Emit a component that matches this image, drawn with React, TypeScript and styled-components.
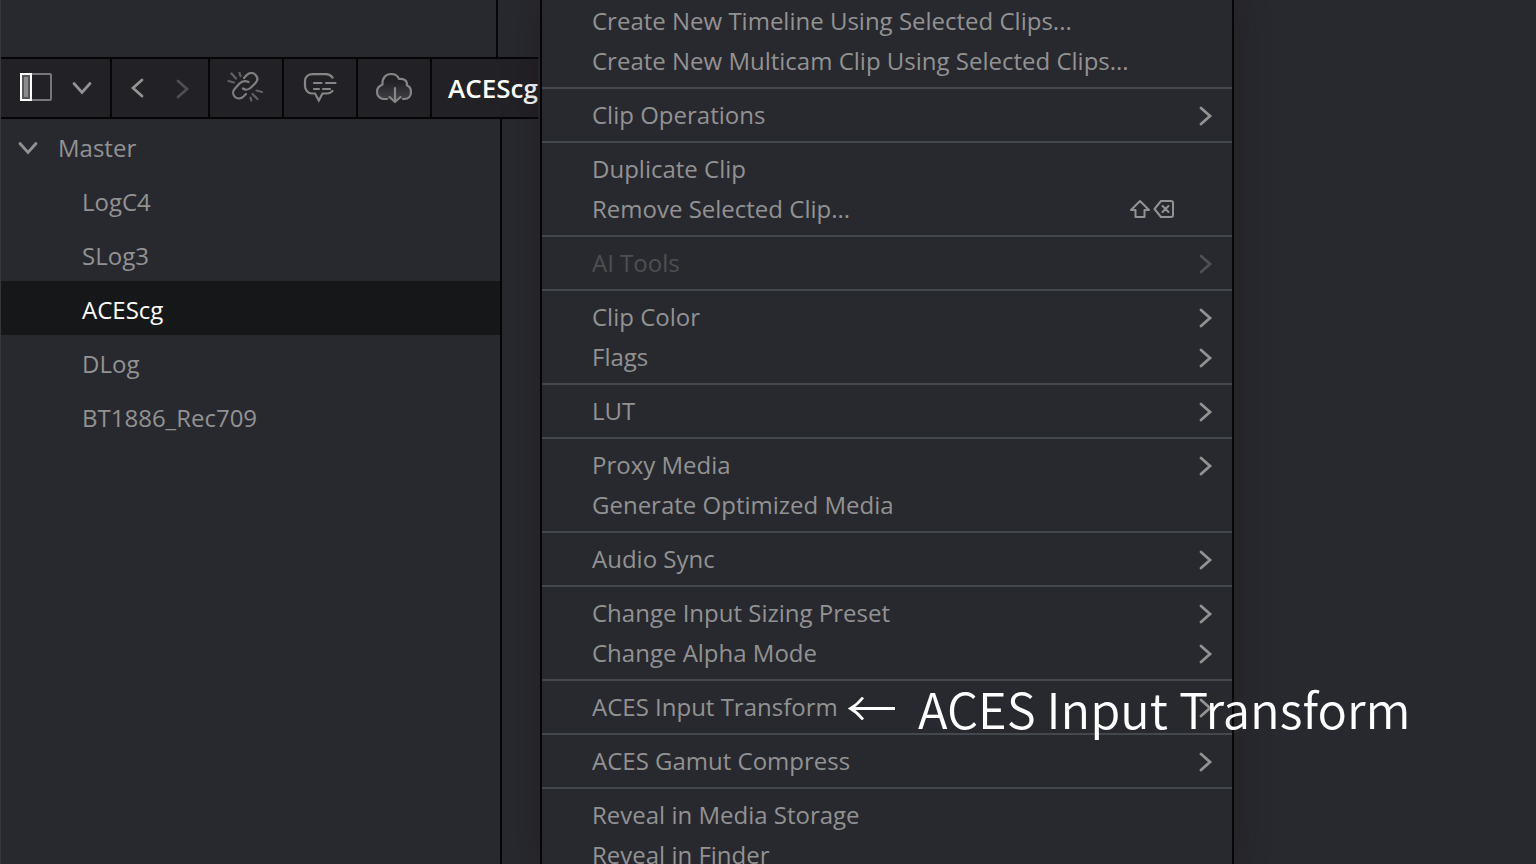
import React from "react";
import styled, { createGlobalStyle } from "styled-components";

const GlobalStyle = createGlobalStyle`
  *, *::before, *::after { box-sizing: border-box; }
  body {
    margin: 0;
    background: #28292e;
    color: #929292;
    font-family: "Open Sans", "Noto Sans", sans-serif;
    font-size: 24px;
    line-height: 32px;
  }
  button { font: inherit; color: inherit; background: none; border: 0; padding: 0; margin: 0; }
  ul { list-style: none; margin: 0; padding: 0; }
  svg { display: block; flex: none; }
`;

const Page = styled.div`
  position: relative;
  height: 100vh;
  overflow: hidden;
`;

const Browser = styled.section`
  width: 538px;
  height: 100%;
  display: flex;
  flex-direction: column;
  border-left: 1px solid #36373c;
`;

const Preview = styled.div`
  width: 497px;
  height: 57px;
  flex: none;
  border-right: 2px solid #060607;
`;

const Toolbar = styled.div`
  display: flex;
  flex: none;
  height: 62px;
  background: #222126;
  border-top: 2px solid #060607;
  border-bottom: 2px solid #060607;
`;

const Group = styled.div<{ $width: number; $between?: boolean }>`
  display: flex;
  justify-content: ${(p) => (p.$between ? "space-between" : "center")};
  width: ${(p) => p.$width}px;
  padding: 0 ${(p) => (p.$between ? 18 : 0)}px;
  flex: none;
  border-right: 2px solid #060607;
`;

const ToolButton = styled.button<{ $dim?: boolean }>`
  display: flex;
  align-items: center;
  justify-content: center;
  color: ${(p) => (p.$dim ? "#4e4e51" : "#929292")};
`;

const BinTitle = styled.h1`
  margin: 0;
  padding-left: 16px;
  font-size: 26px;
  line-height: 58px;
  font-weight: 600;
  color: #ffffff;
`;

const Tree = styled.ul`
  flex: 1;
  width: 501px;
  border-right: 2px solid #060607;
`;

const TreeButton = styled.button<{ $level: number; $selected?: boolean }>`
  display: flex;
  align-items: center;
  gap: 20px;
  width: 100%;
  height: 54px;
  padding: 4px 16px 0 ${(p) => (p.$level ? 81 : 17)}px;
  text-align: left;
  background: ${(p) => (p.$selected ? "#161718" : "transparent")};
  color: ${(p) => (p.$selected ? "#ffffff" : "inherit")};
`;

const Menu = styled.div`
  position: absolute;
  top: 0;
  left: 540px;
  width: 694px;
  height: 100%;
  overflow: hidden;
  background: #28292e;
  border: solid #060607;
  border-width: 0 2px;
  box-shadow: 0 0 32px rgba(24, 14, 24, 0.35);
`;

const MenuGroup = styled.div`
  padding: 6px 0;
  border-bottom: 2px solid #43484c;
  &:first-child { padding-top: 1px; }
  &:last-child { border-bottom: 0; }
`;

const MenuButton = styled.button`
  display: flex;
  align-items: center;
  justify-content: space-between;
  width: 100%;
  height: 40px;
  padding: 0 19px 0 50px;
  text-align: left;
  &:disabled { color: #4e4f52; }
`;

const Shortcut = styled.span`
  display: flex;
  gap: 2px;
  margin-right: 38px;
`;

const Callout = styled.p`
  position: absolute;
  top: 678px;
  left: 848px;
  display: flex;
  align-items: center;
  gap: 22px;
  margin: 0;
  color: #ffffff;
  font-family: "Noto Sans CJK JP", "Open Sans", sans-serif;
  font-weight: 350;
  font-size: 49px;
  line-height: 60px;
  white-space: nowrap;
`;

type Dir = "down" | "left" | "right";

const paths: Record<Dir, { w: number; h: number; d: string }> = {
  down: { w: 20, h: 14, d: "M2 2.5 10 11.5 18 2.5" },
  left: { w: 14, h: 20, d: "M12 2 3 10 12 18" },
  right: { w: 14, h: 22, d: "M2 4 11 12 2 20" },
};

const Chevron = ({ dir }: { dir: Dir }) => {
  const { w, h, d } = paths[dir];
  return (
    <svg width={w} height={h} viewBox={`0 0 ${w} ${h}`} fill="none" stroke="currentColor" strokeWidth="2.8" strokeLinecap="round" aria-hidden="true">
      <path d={d} />
    </svg>
  );
};

const PanelIcon = () => (
  <svg width="34" height="30" viewBox="0 1 34 30" fill="none" aria-hidden="true">
    <rect x="2" y="2" width="30" height="26" rx="1" stroke="#77777a" strokeWidth="2" />
    <rect x="2" y="2" width="10" height="26" fill="#55565a" stroke="#fff" strokeWidth="2" />
    <rect x="5" y="5" width="4" height="20" fill="#8b8b8d" />
  </svg>
);

const LinkIcon = () => (
  <svg width="38" height="32" viewBox="2 1 38 32" fill="none" stroke="#808080" strokeWidth="2.200" strokeLinecap="round" aria-hidden="true">
    <path d="M19 7 22 3.800C25 1 29 1.500 31 4.500c2 2.500 1.500 5.500-.5 7.500L26 16.500c-2.500 2.500-6 2.500-8 1" />
    <path d="M23.500 11c-3-1.500-6.500-1-9 1.500L10 17.500c-2.500 2.500-2.500 6 0 8.500 2.500 2 6 2 8.500-.5L21 23" />
    <path stroke="#626264" d="M6.500 2.500 11 7.500M14.500 2l1 3M3.500 10l5.500 1.500M25.500 26.500l.8 3M27.500 23l5 5M31.500 19.500l5.500 1.500" />
  </svg>
);

const CommentIcon = () => (
  <svg width="34" height="30" viewBox="0 1 34 30" fill="none" stroke="#868686" strokeWidth="2.200" strokeLinecap="round" aria-hidden="true">
    <path d="M29.500 5.500C28 3.500 26 2.200 23 2.200H10C5 2.200 2 5 2 9v5c0 4 3 7.500 7 7.500h3l3.800 7 3.700-7H24c2.500 0 4-1 5.500-2.500" />
    <path d="M11 11h7.500M23 11h9.500M11 17h5M20 17h7" />
  </svg>
);

const CloudIcon = () => (
  <svg width="38" height="32" viewBox="0 0 38 32" fill="none" stroke="#868686" strokeWidth="2.200" strokeLinecap="round" strokeLinejoin="round" aria-hidden="true">
    <defs>
      <linearGradient id="cloudFill" x1="0" y1="0" x2="0" y2="1">
        <stop offset="0.3" stopColor="#222126" />
        <stop offset="0.9" stopColor="#3c3c40" />
      </linearGradient>
    </defs>
    <path d="M12 27H8C4 26 2 23 2 19.500 2 16 4 14 7.500 12.500 7 6 11 2 16 2c4 0 7 2 8 5 5-1 8.500 2 8 6.500 3 1 4 3.500 4 6.500 0 4-2.500 7-6.500 7H28" fill="url(#cloudFill)" />
    <path d="M20 16v14M14.500 25l5.500 5 5.500-5" />
  </svg>
);

const ShiftIcon = () => (
  <svg width="22" height="20" viewBox="0 0 22 20" fill="none" stroke="currentColor" strokeWidth="2" strokeLinejoin="round" aria-hidden="true">
    <path d="M11 2 2 11h4.500v7h9v-7H20z" />
  </svg>
);

const DeleteIcon = () => (
  <svg width="22" height="20" viewBox="0 0 22 20" fill="none" stroke="currentColor" strokeWidth="2" strokeLinecap="round" strokeLinejoin="round" aria-hidden="true">
    <path d="M1.500 10 8 2h10q2 0 2 2v12q0 2-2 2H8zM9.500 7l6 6M15.500 7l-6 6" />
  </svg>
);

const ArrowIcon = () => (
  <svg width="48" height="26" viewBox="0 0 48 26" fill="none" stroke="currentColor" strokeWidth="2.800" aria-hidden="true">
    <path d="M3 13.500H47M15 2.500Q9.500 9.500 2.500 13.500 9.500 17.500 15 24.500" />
  </svg>
);

type Entry = { label: string; sub?: boolean; disabled?: boolean; keys?: boolean };

const groups: Entry[][] = [
  [{ label: "Create New Timeline Using Selected Clips..." }, { label: "Create New Multicam Clip Using Selected Clips..." }],
  [{ label: "Clip Operations", sub: true }],
  [{ label: "Duplicate Clip" }, { label: "Remove Selected Clip...", keys: true }],
  [{ label: "AI Tools", sub: true, disabled: true }],
  [{ label: "Clip Color", sub: true }, { label: "Flags", sub: true }],
  [{ label: "LUT", sub: true }],
  [{ label: "Proxy Media", sub: true }, { label: "Generate Optimized Media" }],
  [{ label: "Audio Sync", sub: true }],
  [{ label: "Change Input Sizing Preset", sub: true }, { label: "Change Alpha Mode", sub: true }],
  [{ label: "ACES Input Transform", sub: true }],
  [{ label: "ACES Gamut Compress", sub: true }],
  [{ label: "Reveal in Media Storage" }, { label: "Reveal in Finder" }],
];

const bins = ["LogC4", "SLog3", "ACEScg", "DLog", "BT1886_Rec709"];

export default function App() {
  return (
    <Page>
      <GlobalStyle />
      <Browser>
        <Preview />
        <Toolbar>
          <Group $width={111} $between>
            <ToolButton aria-label="Toggle bin list"><PanelIcon /></ToolButton>
            <ToolButton aria-label="Bin list options"><Chevron dir="down" /></ToolButton>
          </Group>
          <Group $width={98} $between>
            <ToolButton aria-label="Back"><Chevron dir="left" /></ToolButton>
            <ToolButton aria-label="Forward" $dim><Chevron dir="right" /></ToolButton>
          </Group>
          <Group $width={74}><ToolButton aria-label="Relink media"><LinkIcon /></ToolButton></Group>
          <Group $width={74}><ToolButton aria-label="Comments"><CommentIcon /></ToolButton></Group>
          <Group $width={74}><ToolButton aria-label="Cloud sync"><CloudIcon /></ToolButton></Group>
          <BinTitle>ACEScg</BinTitle>
        </Toolbar>
        <Tree>
          <li>
            <TreeButton $level={0} aria-expanded="true"><Chevron dir="down" />Master</TreeButton>
            <ul>
              {bins.map((b) => (
                <li key={b}><TreeButton $level={1} $selected={b === "ACEScg"}>{b}</TreeButton></li>
              ))}
            </ul>
          </li>
        </Tree>
      </Browser>
      <Menu role="menu">
        {groups.map((g) => (
          <MenuGroup key={g[0].label} role="group">
            {g.map((e) => (
              <MenuButton key={e.label} role="menuitem" disabled={e.disabled}>
                {e.label}
                {e.sub && <Chevron dir="right" />}
                {e.keys && <Shortcut><ShiftIcon /><DeleteIcon /></Shortcut>}
              </MenuButton>
            ))}
          </MenuGroup>
        ))}
      </Menu>
      <Callout><ArrowIcon />ACES Input Transform</Callout>
    </Page>
  );
}
